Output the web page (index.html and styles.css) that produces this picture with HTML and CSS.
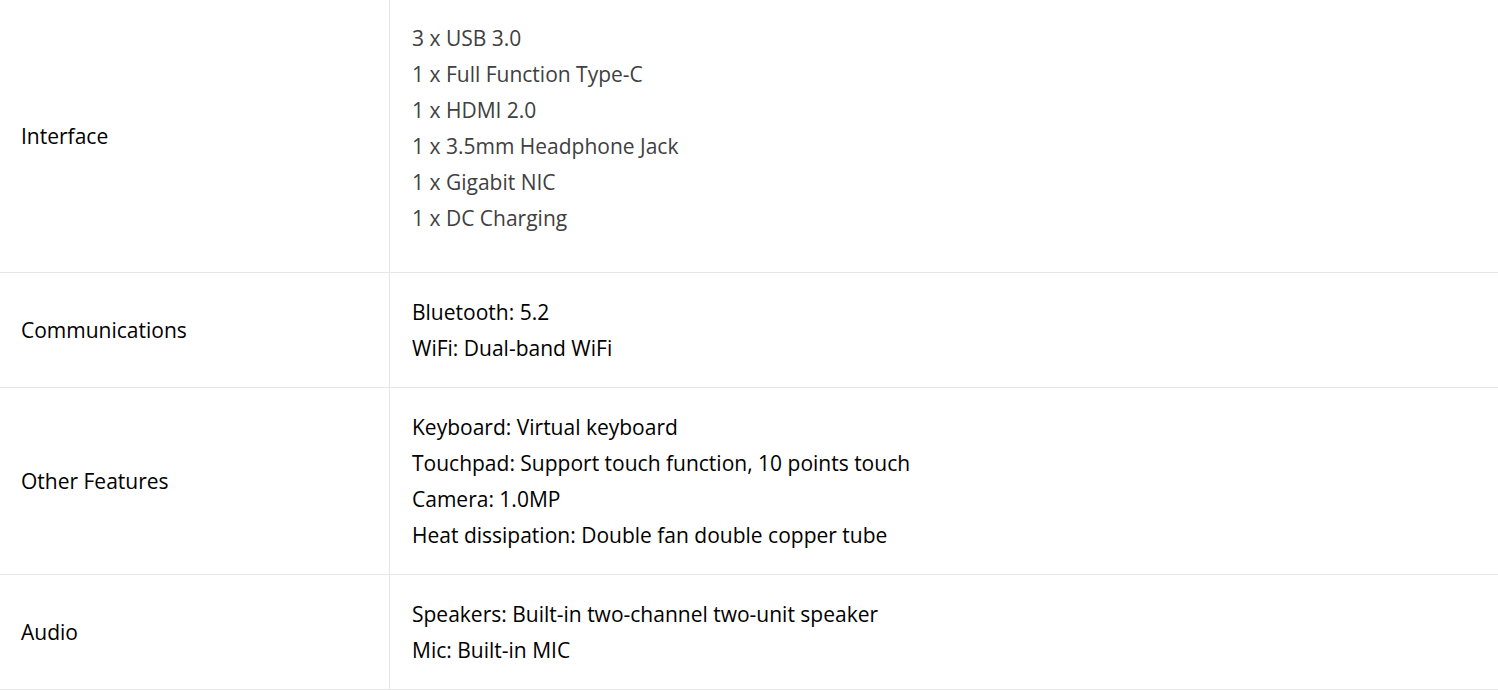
FILE: index.html
```html
<!DOCTYPE html>
<html>
<head>
<meta charset="utf-8">
<link rel="stylesheet" href="styles.css">
</head>
<body>
<table class="spec">
  <tbody>
    <tr>
      <td class="label">Interface</td>
      <td class="value value-first muted">
        <p>3 x USB 3.0</p>
        <p>1 x Full Function Type-C</p>
        <p>1 x HDMI 2.0</p>
        <p>1 x 3.5mm Headphone Jack</p>
        <p>1 x Gigabit NIC</p>
        <p>1 x DC Charging</p>
      </td>
    </tr>
    <tr>
      <td class="label">Communications</td>
      <td class="value">
        <p>Bluetooth: 5.2</p>
        <p>WiFi: Dual-band WiFi</p>
      </td>
    </tr>
    <tr>
      <td class="label">Other Features</td>
      <td class="value">
        <p>Keyboard: Virtual keyboard</p>
        <p>Touchpad: Support touch function, 10 points touch</p>
        <p>Camera: 1.0MP</p>
        <p>Heat dissipation: Double fan double copper tube</p>
      </td>
    </tr>
    <tr>
      <td class="label">Audio</td>
      <td class="value">
        <p>Speakers: Built-in two-channel two-unit speaker</p>
        <p>Mic: Built-in MIC</p>
      </td>
    </tr>
  </tbody>
</table>
</body>
</html>
```
FILE: styles.css
```css
html, body {
  margin: 0;
  padding: 0;
  background: #fff;
}
body {
  font-family: "Open Sans", "Liberation Sans", sans-serif;
  font-size: 21px;
  line-height: 36px;
  color: #000;
}
.spec {
  width: 100%;
  border-collapse: collapse;
  margin-top: -1px;
}
.spec td {
  border-top: 1px solid #e6e6e6;
  border-bottom: 1px solid #e6e6e6;
  vertical-align: middle;
}
.spec td.label {
  width: 368px;
  padding: 21px 0 21px 21px;
  border-right: 1px solid #e6e6e6;
}
.spec td.value {
  padding: 21px 21px 21px 22px;
}
.spec td.value-first {
  padding-top: 20px;
  padding-bottom: 36px;
}
.muted {
  color: #404040;
}
.value p {
  margin: 0;
}
```
